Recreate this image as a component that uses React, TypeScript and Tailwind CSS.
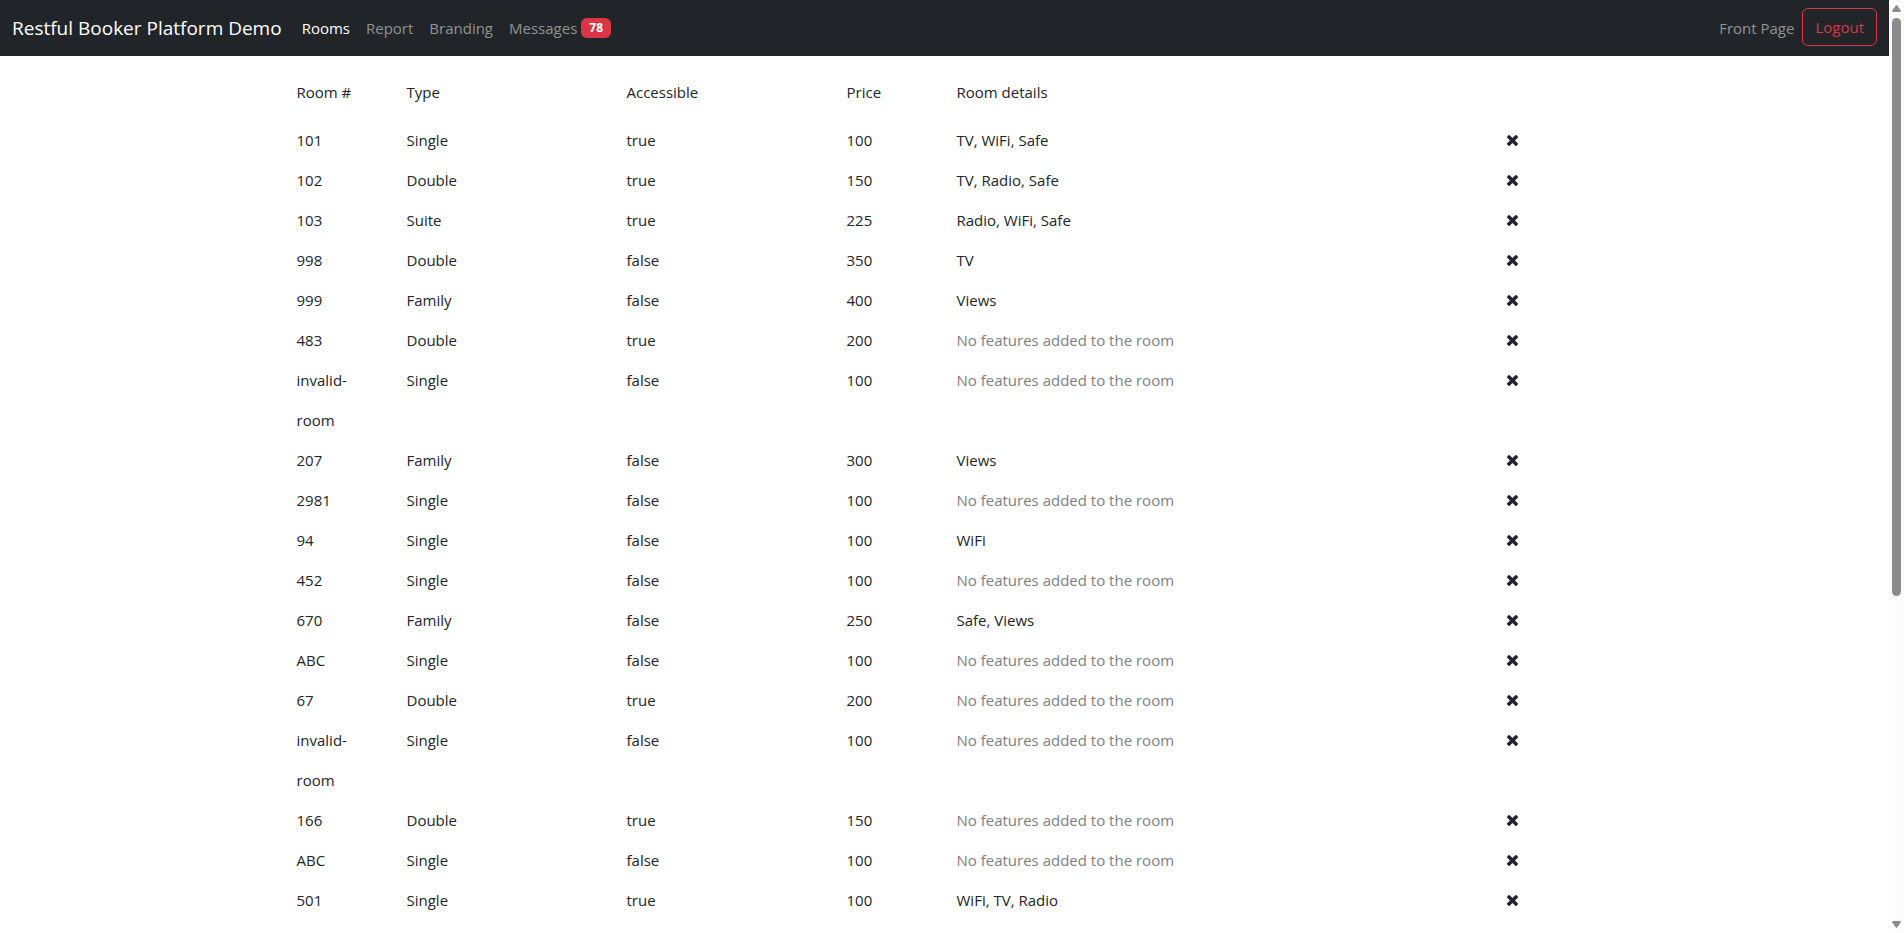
type Room = {
  name: string;
  type: string;
  accessible: boolean;
  price: number;
  features: string[];
};

const rooms: Room[] = [
  { name: "101", type: "Single", accessible: true, price: 100, features: ["TV", "WiFi", "Safe"] },
  { name: "102", type: "Double", accessible: true, price: 150, features: ["TV", "Radio", "Safe"] },
  { name: "103", type: "Suite", accessible: true, price: 225, features: ["Radio", "WiFi", "Safe"] },
  { name: "998", type: "Double", accessible: false, price: 350, features: ["TV"] },
  { name: "999", type: "Family", accessible: false, price: 400, features: ["Views"] },
  { name: "483", type: "Double", accessible: true, price: 200, features: [] },
  { name: "invalid-room", type: "Single", accessible: false, price: 100, features: [] },
  { name: "207", type: "Family", accessible: false, price: 300, features: ["Views"] },
  { name: "2981", type: "Single", accessible: false, price: 100, features: [] },
  { name: "94", type: "Single", accessible: false, price: 100, features: ["WiFi"] },
  { name: "452", type: "Single", accessible: false, price: 100, features: [] },
  { name: "670", type: "Family", accessible: false, price: 250, features: ["Safe", "Views"] },
  { name: "ABC", type: "Single", accessible: false, price: 100, features: [] },
  { name: "67", type: "Double", accessible: true, price: 200, features: [] },
  { name: "invalid-room", type: "Single", accessible: false, price: 100, features: [] },
  { name: "166", type: "Double", accessible: true, price: 150, features: [] },
  { name: "ABC", type: "Single", accessible: false, price: 100, features: [] },
  { name: "501", type: "Single", accessible: true, price: 100, features: ["WiFi", "TV", "Radio"] },
];

function RemoveIcon() {
  return (
    <svg viewBox="302 366 1188 1188" className="size-[11px] fill-current" aria-hidden="true">
      <path d="M1490 1322q0 40-28 68l-136 136q-28 28-68 28t-68-28l-294-294-294 294q-28 28-68 28t-68-28l-136-136q-28-28-28-68t28-68l294-294-294-294q-28-28-28-68t28-68l136-136q28-28 68-28t68 28l294 294 294-294q28-28 68-28t68 28l136 136q28 28 28 68t-28 68l-294 294 294 294q28 28 28 68z" />
    </svg>
  );
}

function NavBar() {
  return (
    <nav className="flex items-center bg-[#212529] px-3 py-2 text-[#909294]">
      <a href="#" className="mr-3 text-[19px] text-white">
        Restful Booker Platform Demo
      </a>
      <ul className="flex grow items-center">
        <li><a href="#rooms" className="block p-2 text-white">Rooms</a></li>
        <li><a href="#report" className="block p-2">Report</a></li>
        <li><a href="#branding" className="block p-2">Branding</a></li>
        <li>
          <a href="#messages" className="flex items-center gap-1 p-2">
            Messages
            <span className="rounded-md bg-[#dc3545] px-2 py-1 text-xs leading-3 font-bold text-white">78</span>
          </a>
        </li>
      </ul>
      <a href="#front" className="p-2">Front Page</a>
      <button
        type="button"
        className="self-start rounded-md border border-[#dc3545] px-3 py-1.5 leading-6 text-[#dc3545]"
      >
        Logout
      </button>
    </nav>
  );
}

function RoomTable() {
  return (
    <table className="mx-auto mt-4 w-full max-w-[1320px] table-fixed text-left leading-10">
      <colgroup>
        <col className="w-1/12" />
        <col className="w-2/12" />
        <col className="w-2/12" />
        <col className="w-1/12" />
        <col className="w-5/12" />
        <col className="w-1/12" />
      </colgroup>
      <thead>
        <tr>
          <th className="px-3 pb-2 font-normal">Room #</th>
          <th className="px-3 pb-2 font-normal">Type</th>
          <th className="px-3 pb-2 font-normal">Accessible</th>
          <th className="px-3 pb-2 font-normal">Price</th>
          <th className="px-3 pb-2 font-normal">Room details</th>
          <td />
        </tr>
      </thead>
      <tbody>
        {rooms.map((room, index) => (
          <tr key={index} className="align-top">
            <td className="px-3">{room.name}</td>
            <td className="px-3">{room.type}</td>
            <td className="px-3">{String(room.accessible)}</td>
            <td className="px-3">{room.price}</td>
            <td className="px-3">
              {room.features.length > 0 ? (
                room.features.join(", ")
              ) : (
                <span className="text-[#808080]">No features added to the room</span>
              )}
            </td>
            <td className="px-3">
              <button type="button" aria-label={"Delete room " + room.name} className="flex h-10 items-center">
                <RemoveIcon />
              </button>
            </td>
          </tr>
        ))}
      </tbody>
    </table>
  );
}

function ScrollTrack() {
  return (
    <div className="flex h-screen w-[15px] shrink-0 flex-col items-center bg-[#fcfcfc] py-1" aria-hidden="true">
      <svg viewBox="0 0 9 8" className="h-2 w-[9px] fill-[#8b8b8b]">
        <path d="M3.8 1.4Q4.5.6 5.2 1.4L8.7 6.4Q9 8 8 8H1Q0 8 .3 6.4Z" />
      </svg>
      <div className="min-h-0 w-full grow px-[3px] pt-1.5">
        <div className="h-[64%] rounded-full bg-[#8b8b8b]" />
      </div>
      <svg viewBox="0 0 9 8" className="h-2 w-[9px] fill-[#8b8b8b]">
        <path d="M3.8 6.6Q4.5 7.4 5.2 6.6L8.7 1.6Q9 0 8 0H1Q0 0 .3 1.6Z" />
      </svg>
    </div>
  );
}

export default function App() {
  return (
    <div className="flex min-h-screen bg-white font-['Open_Sans','Noto_Sans',sans-serif] text-[15px] leading-6 text-[#212529]">
      <div className="min-w-0 grow">
        <NavBar />
        <main>
          <RoomTable />
        </main>
      </div>
      <ScrollTrack />
    </div>
  );
}
